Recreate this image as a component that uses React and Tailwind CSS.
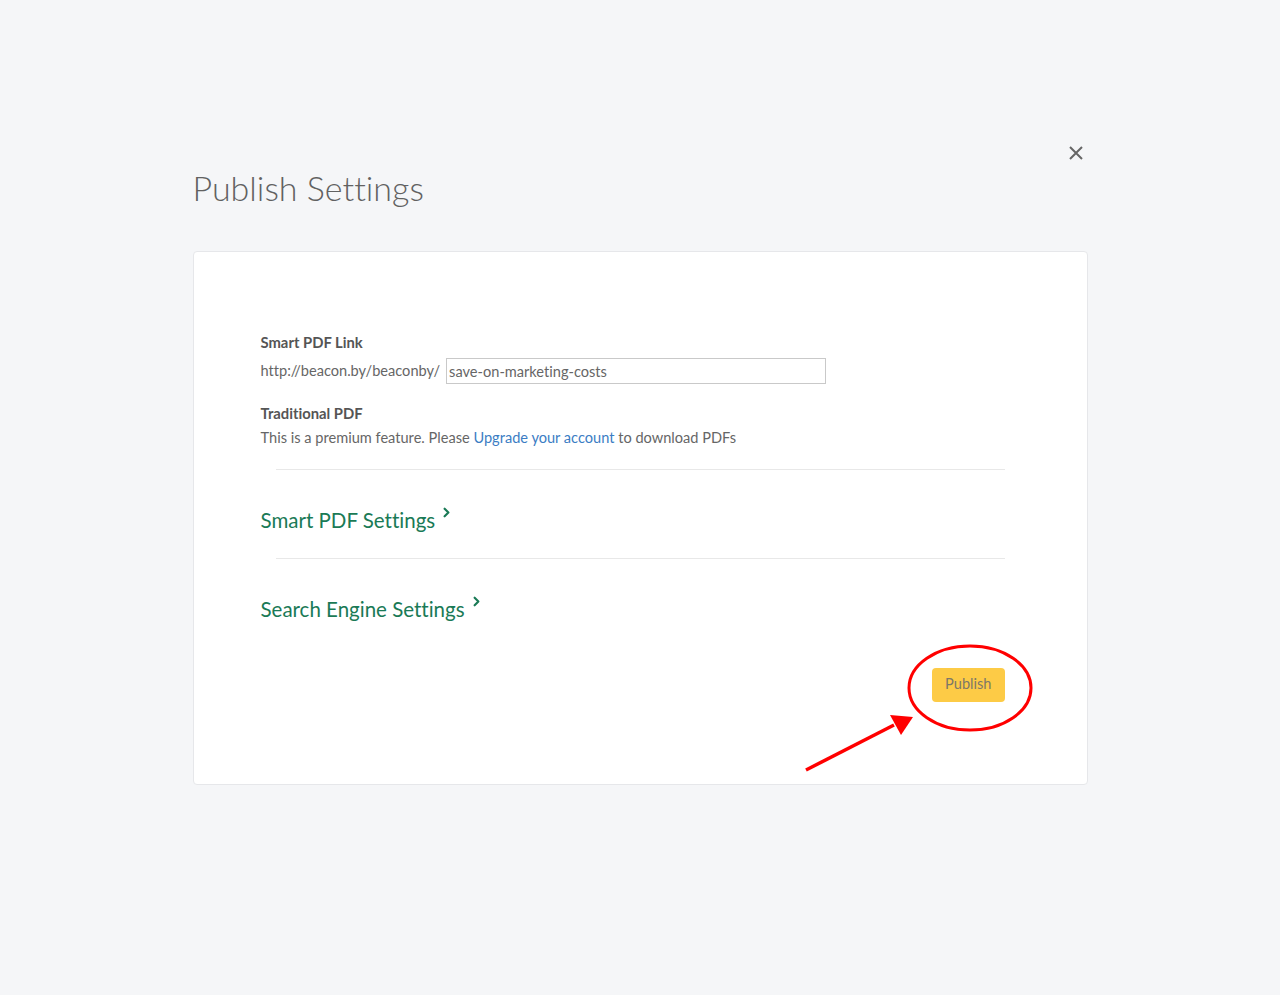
import React from 'react';
import { ChevronRight } from 'lucide-react';

const FONT = { fontFamily: 'Lato, "Noto Sans", sans-serif', fontVariantLigatures: 'none' };

export default function App() {
  return (
    <div className="min-h-screen bg-[#f5f6f8] text-[#666]" style={FONT}>
      <div className="relative mx-auto w-[895px] pt-[166px]">
        {/* close */}
        <button className="absolute right-[4px] top-[145px] grid size-[16px] place-items-center text-[#666]">
          <svg width="16" height="16" viewBox="0 0 16 16" fill="none" stroke="currentColor" strokeWidth="2">
            <path d="M2 2L14 14M14 2L2 14" />
          </svg>
        </button>

        <h1 className="text-[34px] leading-[44px] font-light text-[#616161]">Publish Settings</h1>

        <div className="relative mt-[41px] rounded border border-[#e6e7ea] bg-white px-[67px] pt-[80px] pb-[82px]">
          <p className="text-[14.8px] leading-[20px] font-bold text-[#555]">Smart PDF Link</p>
          <div className="mt-[6px] flex items-center gap-[6px] text-[14.6px]">
            <span className="text-[#666]">http://beacon.by/beaconby/</span>
            <input
              readOnly
              value="save-on-marketing-costs"
              className="h-[26px] w-[380px] border border-[#c9c9c9] px-[2px] text-[14.6px] text-[#666] outline-none"
              style={FONT}
            />
          </div>

          <p className="mt-[19px] text-[14.8px] leading-[20px] font-bold text-[#555]">Traditional PDF</p>
          <p className="mt-[5px] text-[14.6px] leading-[20px] text-[#666]">
            This is a premium feature. Please <a className="text-[#3b7dc4]">Upgrade your account</a> to download PDFs
          </p>

          <div className="mx-[15px] mt-[21px] border-t border-[#e8e8e8]" />
          <a className="mt-[37px] flex items-center text-[20.5px] leading-[26px] text-[#1a7a56]">
            Smart PDF Settings
            <ChevronRight size={15} strokeWidth={3.5} className="ml-[4px] -mt-[16px]" />
          </a>

          <div className="mx-[15px] mt-[25px] border-t border-[#e8e8e8]" />
          <a className="mt-[37px] flex items-center text-[20.5px] leading-[26px] text-[#1a7a56]">
            Search Engine Settings
            <ChevronRight size={15} strokeWidth={3.5} className="ml-[4px] -mt-[16px]" />
          </a>

          <div className="mt-[46px] flex justify-end pr-[15px]">
            <button className="h-[34px] rounded bg-[#fdcb46] px-[13px] pb-[3px] text-[14.6px] text-[#7d7868]" style={FONT}>
              Publish
            </button>
          </div>

          {/* annotation */}
          <svg className="pointer-events-none absolute left-[600px] top-[380px]" width="260" height="150" viewBox="600 380 260 150">
            <ellipse cx="776" cy="436" rx="61" ry="42" fill="none" stroke="#ff0000" strokeWidth="3" />
            <path d="M612 518L700 473" stroke="#ff0000" strokeWidth="3.5" />
            <path d="M719 465L696 463L707 483Z" fill="#ff0000" />
          </svg>
        </div>
      </div>
    </div>
  );
}
